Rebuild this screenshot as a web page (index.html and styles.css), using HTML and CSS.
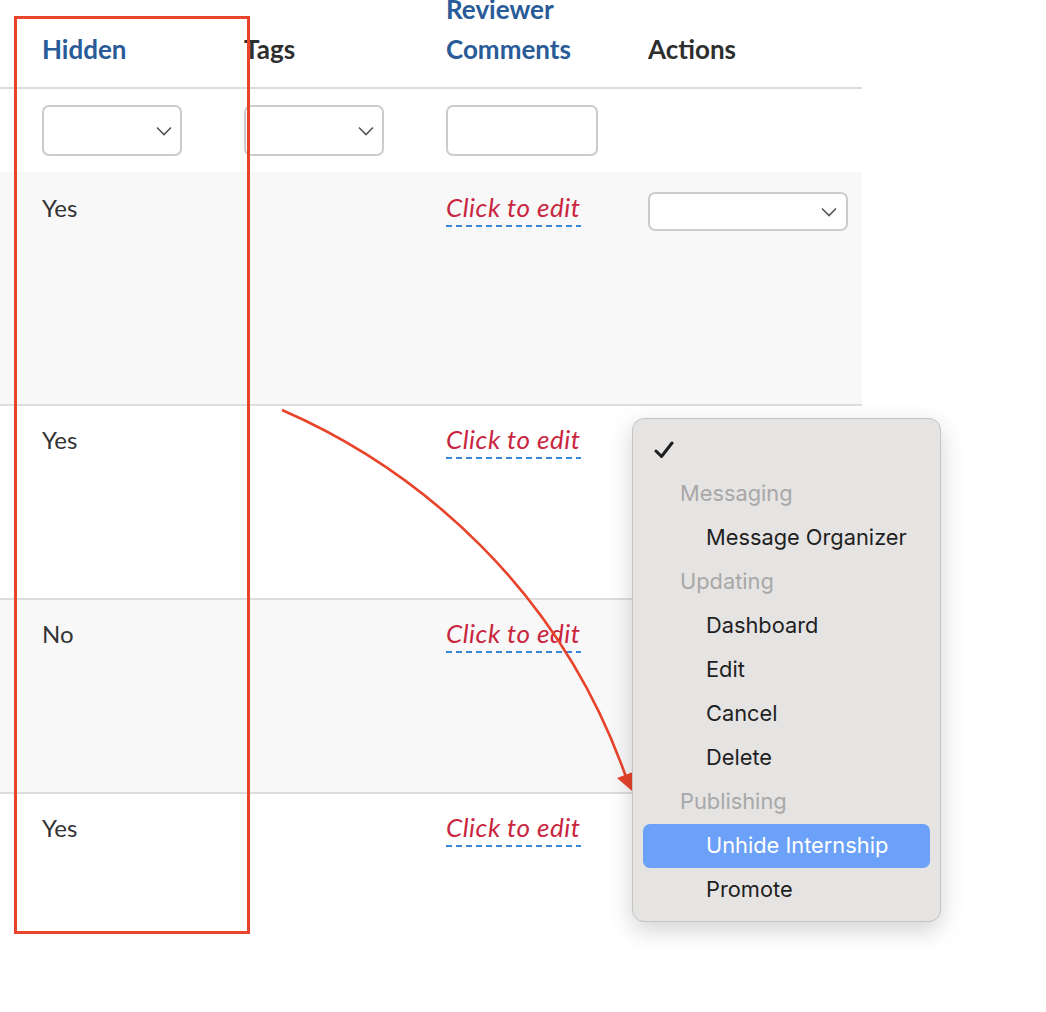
FILE: index.html
```html
<!DOCTYPE html>
<html lang="en">
<head>
    <meta charset="UTF-8">
    <meta name="viewport" content="width=device-width, initial-scale=1.0">
    <title>Internships</title>
    <link rel="stylesheet" href="styles.css">
</head>

<body>
    <div class="grid">
        <div class="row head">
            <div class="cell sort">Hidden</div>
            <div class="cell">Tags</div>
            <div class="cell sort">Reviewer<br>Comments</div>
            <div class="cell">Actions</div>
        </div>

        <div class="row filters">
            <div class="cell">
                <div class="select">
                    <svg width="16" height="10" viewBox="0 0 16 10"><path d="M1 1.5 L8 8.5 L15 1.5" fill="none" stroke="#555" stroke-width="1.6"/></svg>
                </div>
            </div>
            <div class="cell">
                <div class="select">
                    <svg width="16" height="10" viewBox="0 0 16 10"><path d="M1 1.5 L8 8.5 L15 1.5" fill="none" stroke="#555" stroke-width="1.6"/></svg>
                </div>
            </div>
            <div class="cell">
                <div class="text-input"></div>
            </div>
            <div class="cell"></div>
        </div>

        <div class="row item first striped">
            <div class="cell">Yes</div>
            <div class="cell"></div>
            <div class="cell"><span class="edit">Click to edit</span></div>
            <div class="cell">
                <div class="select action">
                    <svg width="16" height="10" viewBox="0 0 16 10"><path d="M1 1.5 L8 8.5 L15 1.5" fill="none" stroke="#555" stroke-width="1.6"/></svg>
                </div>
            </div>
        </div>

        <div class="row item">
            <div class="cell">Yes</div>
            <div class="cell"></div>
            <div class="cell"><span class="edit">Click to edit</span></div>
            <div class="cell"></div>
        </div>

        <div class="row item striped">
            <div class="cell">No</div>
            <div class="cell"></div>
            <div class="cell"><span class="edit">Click to edit</span></div>
            <div class="cell"></div>
        </div>

        <div class="row item last">
            <div class="cell">Yes</div>
            <div class="cell"></div>
            <div class="cell"><span class="edit">Click to edit</span></div>
            <div class="cell"></div>
        </div>
    </div>

    <!-- annotation: box around the Hidden column and arrow to the menu -->
    <div class="mark-box"></div>
    <svg class="mark-arrow" width="1046" height="1012" viewBox="0 0 1046 1012">
        <path d="M282 410 C 420 470 560 590 626 777" fill="none" stroke="#e8432b" stroke-width="2.6"/>
        <polygon points="617,778 633,772 632,791" fill="#e8432b"/>
    </svg>

    <div class="menu">
        <div class="menu-row checked">
            <svg width="20" height="18" viewBox="0 0 20 18"><path d="M2 10 L7.5 15.5 L18 2" fill="none" stroke="#1f1f1f" stroke-width="3" stroke-linecap="round" stroke-linejoin="round"/></svg>
        </div>
        <div class="menu-row group">Messaging</div>
        <div class="menu-row">Message Organizer</div>
        <div class="menu-row group">Updating</div>
        <div class="menu-row">Dashboard</div>
        <div class="menu-row">Edit</div>
        <div class="menu-row">Cancel</div>
        <div class="menu-row">Delete</div>
        <div class="menu-row group">Publishing</div>
        <div class="menu-row active">Unhide Internship</div>
        <div class="menu-row">Promote</div>
    </div>
</body>
</html>
```

FILE: styles.css
```css
* {
    margin: 0;
    padding: 0;
    box-sizing: border-box;
}

html, body {
    width: 1046px;
    height: 1012px;
    overflow: hidden;
    background: #fff;
}

body {
    position: relative;
    font-family: 'Lato', sans-serif;
    color: #333;
}

.grid {
    width: 862px;
    margin-top: -11px;
}

.row {
    display: grid;
    grid-template-columns: 202px 202px 202px 256px;
}

.cell {
    padding-left: 42px;
}

/* header */
.head {
    align-items: end;
    padding-bottom: 18px;
    border-bottom: 2px solid #ddd;
}

.head .cell {
    font-size: 26px;
    font-weight: bold;
    line-height: 40px;
    color: #2e2e2e;
}

.head .sort {
    color: #285b98;
}

/* filter row */
.filters {
    height: 83px;
    padding-top: 16px;
}

.select,
.text-input {
    height: 51px;
    background: #fff;
    border: 2px solid #ccc;
    border-radius: 7px;
}

.select {
    width: 140px;
    display: flex;
    align-items: center;
    justify-content: flex-end;
    padding-right: 8px;
}

.text-input {
    width: 152px;
}

.select.action {
    width: 200px;
    height: 39px;
    padding-right: 9px;
}

/* data rows */
.item {
    height: 194px;
    padding-top: 18px;
    border-bottom: 2px solid #ddd;
    font-size: 24px;
    line-height: 32px;
}

.item.first {
    height: 234px;
    padding-top: 20px;
}

.item.last {
    border-bottom: none;
}

.striped {
    background: #f8f8f8;
}

.edit {
    display: inline-block;
    font-style: italic;
    font-size: 26px;
    letter-spacing: .5px;
    line-height: 30px;
    color: #c9263f;
    padding-bottom: 5px;
    background: repeating-linear-gradient(to right, #3a88d4 0 6px, transparent 6px 10px) bottom left / 100% 2px no-repeat;
}

/* annotation */
.mark-box {
    position: absolute;
    left: 14px;
    top: 16px;
    width: 236px;
    height: 918px;
    border: 3px solid #e8432b;
}

.mark-arrow {
    position: absolute;
    left: 0;
    top: 0;
}

/* native popup menu */
.menu {
    position: absolute;
    left: 632px;
    top: 418px;
    width: 309px;
    height: 504px;
    padding: 9px 10px 0;
    background: #e5e4e3;
    border: 1px solid #c4c4c4;
    border-radius: 12px;
    box-shadow: 0 8px 24px rgba(0, 0, 0, .18);
    font-family: 'Inter', sans-serif;
    font-size: 21.8px;
    color: #1f1f1f;
}

.menu-row {
    height: 44px;
    line-height: 42px;
    padding-left: 63px;
    border-radius: 7px;
}

.menu-row.group {
    padding-left: 37px;
    color: #a8a8a8;
}

.menu-row.checked {
    display: flex;
    align-items: center;
    padding-left: 11px;
}

.menu-row.active {
    background: #6ba1f8;
    color: #fff;
}
```
